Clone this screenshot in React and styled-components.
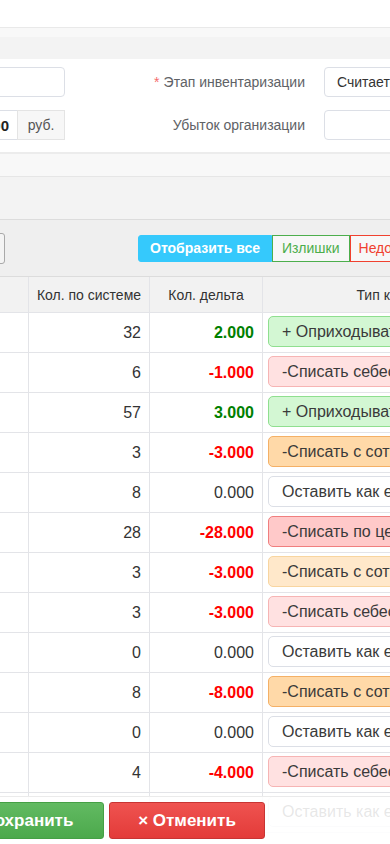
import React from "react";
import styled, { createGlobalStyle } from "styled-components";

const GlobalStyle = createGlobalStyle`
  html, body { margin: 0; padding: 0; background: #fff; overflow: hidden; }
  body { font-family: "Liberation Sans", Arial, sans-serif; color: #333; }
  * { box-sizing: border-box; }
`;

const Viewport = styled.div`
  width: 390px;
  height: 844px;
  overflow: hidden;
`;

const Canvas = styled.div`
  position: relative;
  width: 800px;
  height: 844px;
  margin-left: -100px;
  overflow: hidden;
`;

const TopSpace = styled.div`
  height: 28px;
  border-bottom: 1px solid #e9e9e9;
`;

const PanelHead = styled.div`
  height: 31px;
  background: linear-gradient(#f8f8f8 0, #f8f8f8 9px, #f3f3f3 9px, #f3f3f3 100%);
`;

const Form = styled.div`
  display: flex;
  flex-direction: column;
  gap: 13px;
  padding: 8px 0 12px;
  border-bottom: 2px solid #ececec;
`;

const FormRow = styled.div`
  display: flex;
  align-items: center;
  height: 30px;
`;

const LeftCol = styled.div`
  width: 165px;
  height: 30px;
  display: flex;
`;

const Input = styled.div`
  flex: 1;
  height: 30px;
  border: 1px solid #dcdfe6;
  border-radius: 4px;
  background: #fff;
  font-size: 14px;
  color: #333;
  display: flex;
  align-items: center;
  padding: 0 12px;
  white-space: nowrap;
  overflow: hidden;
`;

const GroupInput = styled.div`
  flex: 1;
  height: 30px;
  border: 1px solid #dcdfe6;
  border-right: none;
  background: #fff;
  font-size: 15px;
  font-weight: bold;
  color: #222;
  display: flex;
  align-items: center;
  justify-content: flex-end;
  padding-right: 8px;
`;

const Addon = styled.div`
  width: 48px;
  height: 30px;
  border: 1px solid #e4e4e4;
  background: #f7f7f7;
  color: #555;
  font-size: 14px;
  display: flex;
  align-items: center;
  justify-content: center;
`;

const Label = styled.div`
  width: 240px;
  text-align: right;
  font-size: 14px;
  color: #606266;
  white-space: nowrap;
`;

const Star = styled.span`
  color: #f56c6c;
  margin-right: 4px;
`;

const RightInput = styled(Input)`
  flex: none;
  width: 260px;
  margin-left: 19px;
`;

const SubHead = styled.div`
  height: 23px;
  background: #f8f8f8;
  border-bottom: 1px solid #e6e6e6;
`;

const Band = styled.div`
  height: 43px;
  background: #f3f3f3;
  border-bottom: 1px solid #dcdcdc;
`;

const Toolbar = styled.div`
  height: 57px;
  background: #efefef;
  border-bottom: 1px solid #dcdcdc;
  display: flex;
  align-items: center;
`;

const GhostButton = styled.div`
  width: 80px;
  height: 31px;
  margin-left: 25px;
  border: 1px solid #a9a9a9;
  border-radius: 3px;
  background: #f4f4f4;
`;

const FilterGroup = styled.div`
  display: flex;
  margin-left: 133px;
  height: 27px;
`;

const FilterButton = styled.div`
  height: 27px;
  padding: 0 ${(p) => p.$px}px;
  display: flex;
  align-items: center;
  font-size: 14px;
  white-space: nowrap;
  ${(p) =>
    p.$active
      ? `background:#35c9fc;color:#fff;font-weight:bold;border:1px solid #35c9fc;border-radius:3px 0 0 3px;`
      : `background:#f7f7f7;color:${p.$color};border:1px solid ${p.$color};`}
`;

const Row = styled.div`
  display: grid;
  grid-template-columns: 129px 121px 113px 310px;
  height: ${(p) => (p.$head ? 36 : 40)}px;
  background: ${(p) => (p.$head ? "#f2f2f2" : "#fff")};
`;

const Cell = styled.div`
  border-right: 1px solid #e3e4e8;
  border-bottom: 1px solid #e3e4e8;
  display: flex;
  align-items: center;
  justify-content: ${(p) => (p.$align === "center" ? "center" : p.$align === "start" ? "flex-start" : "flex-end")};
  padding: ${(p) => (p.$align === "center" ? "0" : p.$align === "start" ? "0 0 0 10px" : "0 8px 0 0")};
  font-size: ${(p) => (p.$head ? 14 : 16)}px;
  color: #333;
  white-space: nowrap;
  overflow: hidden;
`;

const Delta = styled.span`
  font-weight: ${(p) => (p.$v === 0 ? "normal" : "bold")};
  color: ${(p) => (p.$v > 0 ? "#008000" : p.$v < 0 ? "#ff0000" : "#333")};
`;

const TypeCell = styled.div`
  border-bottom: 1px solid #e3e4e8;
  padding: 3px 0 0 5px;
`;

const pillColors = {
  plus: ["#d3f7d3", "#8fdf8f"],
  pink: ["#ffe1e1", "#f6b4b4"],
  orange: ["#ffd9a8", "#f4b066"],
  lightorange: ["#ffe8ca", "#f8d5a0"],
  red: ["#ffc9c9", "#f07e7e"],
  none: ["#ffffff", "#dcdfe6"],
};

const Pill = styled.div`
  width: 300px;
  height: 31px;
  border-radius: 5px;
  border: 1px solid ${(p) => pillColors[p.$kind][1]};
  background: ${(p) => pillColors[p.$kind][0]};
  color: #3a3a3a;
  font-size: 16px;
  padding-left: 13px;
  display: flex;
  align-items: center;
  white-space: nowrap;
  overflow: hidden;
`;

const Footer = styled.div`
  position: absolute;
  left: 0;
  right: 0;
  bottom: 0;
  height: 48px;
  background: rgba(255, 255, 255, 0.88);
  border-top: 1px solid rgba(230, 230, 230, 0.8);
  display: flex;
  align-items: flex-start;
  gap: 5px;
  padding: 5px 0 0 33px;
`;

const ActionButton = styled.div`
  width: ${(p) => p.$w}px;
  height: 37px;
  border-radius: 3px;
  display: flex;
  align-items: center;
  justify-content: center;
  gap: 6px;
  color: #fff;
  font-weight: bold;
  font-size: 17px;
  white-space: nowrap;
  background: ${(p) =>
    p.$tone === "green"
      ? "linear-gradient(#62ba62, #4ca94c)"
      : "linear-gradient(#ef5350, #e33b39)"};
  border: 1px solid ${(p) => (p.$tone === "green" ? "#45a045" : "#c83433")};
`;

const rows = [
  [32, 2, "plus", "+ Оприходывать излишки"],
  [6, -1, "pink", "-Списать себестоимость"],
  [57, 3, "plus", "+ Оприходывать излишки"],
  [3, -3, "orange", "-Списать с сотрудника"],
  [8, 0, "none", "Оставить как есть"],
  [28, -28, "red", "-Списать по цене продажи"],
  [3, -3, "lightorange", "-Списать с сотрудника"],
  [3, -3, "pink", "-Списать себестоимость"],
  [0, 0, "none", "Оставить как есть"],
  [8, -8, "orange", "-Списать с сотрудника"],
  [0, 0, "none", "Оставить как есть"],
  [4, -4, "pink", "-Списать себестоимость"],
  [null, null, "none", "Оставить как есть"],
];

export default function App() {
  return (
    <Viewport>
      <GlobalStyle />
      <Canvas>
        <TopSpace />
        <PanelHead />
        <Form>
          <FormRow>
            <LeftCol>
              <Input />
            </LeftCol>
            <Label>
              <Star>*</Star>Этап инвентаризации
            </Label>
            <RightInput>Считается остаток</RightInput>
          </FormRow>
          <FormRow>
            <LeftCol>
              <GroupInput>1 200.00</GroupInput>
              <Addon>руб.</Addon>
            </LeftCol>
            <Label>Убыток организации</Label>
            <RightInput />
          </FormRow>
        </Form>
        <SubHead />
        <Band />
        <Toolbar>
          <GhostButton />
          <FilterGroup>
            <FilterButton $active $px={11}>Отобразить все</FilterButton>
            <FilterButton $color="#4cae4c" $px={9}>Излишки</FilterButton>
            <FilterButton $color="#f0412f" $px={8}>Недостачи</FilterButton>
          </FilterGroup>
        </Toolbar>
        <Row $head>
          <Cell $head $align="start">Товар</Cell>
          <Cell $head $align="center">Кол. по системе</Cell>
          <Cell $head $align="center">Кол. дельта</Cell>
          <Cell $head $align="center">Тип корректировки</Cell>
        </Row>
        {rows.map(([sys, d, kind, label], i) => (
          <Row key={i}>
            <Cell />
            <Cell>{sys}</Cell>
            <Cell>
              {d !== null && <Delta $v={d}>{d.toFixed(3)}</Delta>}
            </Cell>
            <TypeCell>
              <Pill $kind={kind}>{label}</Pill>
            </TypeCell>
          </Row>
        ))}
        <Footer>
          <ActionButton $tone="green" $w={171}>✔ Сохранить</ActionButton>
          <ActionButton $tone="red" $w={156}>× Отменить</ActionButton>
        </Footer>
      </Canvas>
    </Viewport>
  );
}
